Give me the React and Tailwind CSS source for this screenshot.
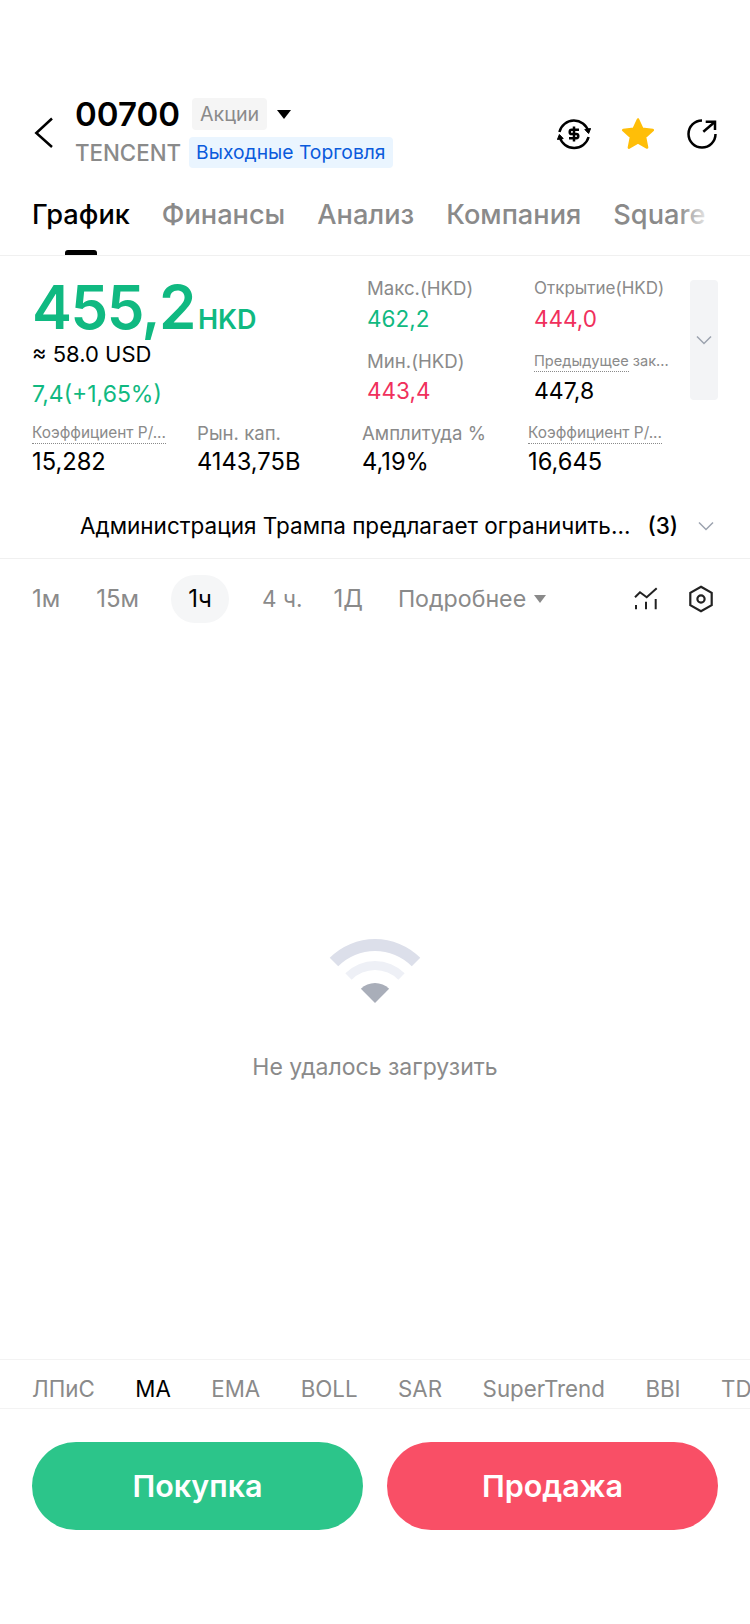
const green = "text-[#10b981]";
const red = "text-[#f0305c]";

const tabs = ["Финансы", "Анализ", "Компания", "Square"];
const indicators = ["EMA", "BOLL", "SAR", "SuperTrend", "BBI", "TD"];

const Chevron = ({ size = 20, color = "#9ca3af" }) => (
    <svg width={size} height={size} viewBox="0 0 20 20" fill="none" stroke={color} strokeWidth="1.5">
        <path d="M3 6.5 L10 13.5 L17 6.5" />
    </svg>
);

const SwapIcon = () => (
    <svg width="34" height="34" viewBox="0 0 34 34" fill="none" stroke="#000" strokeWidth="2.5">
        <path d="M2.4 15 A15 15 0 0 1 31.4 14.5" />
        <path d="M31.6 20 A15 15 0 0 1 2.7 20" />
        <path d="M27.8 12.5 L31.6 16.5 L33.6 11.5 Z" fill="#000" strokeWidth="1" />
        <path d="M6.2 21.5 L2.4 17.5 L0.4 22.5 Z" fill="#000" strokeWidth="1" />
        <path d="M22 12.8 H14.8 a2.1 2.1 0 0 0 0 4.2 h4.4 a2.1 2.1 0 0 1 0 4.2 H12" />
        <path d="M17 9.5 V24.5" />
    </svg>
);

const StarIcon = () => (
    <svg width="34" height="34" viewBox="0 0 34 34" fill="#ffbe08" stroke="#ffbe08" strokeWidth="2.5" strokeLinejoin="round">
        <path d="M17 2.5 L21.3 11.8 L31.8 13.1 L24.1 20.2 L26.1 30.6 L17 25.4 L7.9 30.6 L9.9 20.2 L2.2 13.1 L12.7 11.8 Z" />
    </svg>
);

const ShareIcon = () => (
    <svg width="34" height="34" viewBox="0 0 34 34" fill="none" stroke="#000" strokeWidth="2.5">
        <path d="M17 3.5 A13.5 13.5 0 1 0 30.5 17" />
        <path d="M18.3 14.7 L30 4.7" />
        <path d="M20.7 4.7 H30 V13" />
    </svg>
);

const ChartIcon = () => (
    <svg width="28" height="28" viewBox="0 0 28 28" fill="none" stroke="#222" strokeWidth="2">
        <path d="M3 12.3 L8 7.3 L14.7 12.3 L24.7 3.3" />
        <path d="M4 20 V24.3 M14 16.7 V24.3 M23.7 14 V24.3" />
    </svg>
);

const HexIcon = () => (
    <svg width="28" height="28" viewBox="0 0 28 28" fill="none" stroke="#222" strokeWidth="2.2">
        <path d="M14 1.7 L24.7 7.8 V20.2 L14 26.3 L3.3 20.2 V7.8 Z" />
        <circle cx="14" cy="14" r="3.6" />
    </svg>
);

const WifiIcon = () => (
    <svg width="92" height="66" viewBox="0 0 92 66">
        <path d="M0.75 19.75 A64 64 0 0 1 91.25 19.75 L82.77 28.23 A52 52 0 0 0 9.23 28.23 Z" fill="#dcdfea" />
        <path d="M16.3 35.3 A42 42 0 0 1 75.7 35.3 L69.33 41.67 A33 33 0 0 0 22.67 41.67 Z" fill="#eef0f6" />
        <path d="M31.86 50.86 A20 20 0 0 1 60.14 50.86 L46 65 Z" fill="#a9aeb9" />
    </svg>
);

const Dotted = ({ children }) => (
    <span className="border-b border-dotted border-[#8a8a8a] pb-[1px]">{children}</span>
);

const Metric = ({ width, label, value, dotted }) => (
    <div className={width}>
        <div className={dotted ? "text-[15.4px] leading-[22px] text-[#8a8a8a]" : "text-[18.6px] leading-[22px] text-[#8a8a8a]"}>
            {dotted ? <Dotted>{label}</Dotted> : label}
        </div>
        <div className="mt-[4px] text-[23.7px] leading-[28px] text-black">{value}</div>
    </div>
);

const App = () => {
    return (
        <div className="flex h-[1624px] w-[750px] flex-col overflow-hidden bg-white font-['Inter',sans-serif]">
            {/* header */}
            <div className="flex items-start pl-[32px] pr-[31px] pt-[96px]">
                <svg width="24" height="32" viewBox="0 0 24 32" fill="none" stroke="#000" strokeWidth="2.5" className="mt-[21px]">
                    <path d="M20 1.5 L4.3 16 L20 30" />
                </svg>
                <div className="ml-[19px]">
                    <div className="flex items-center">
                        <span className="text-[33px] font-semibold leading-[36px] text-black">00700</span>
                        <span className="ml-[12px] rounded-[4px] bg-[#f5f5f5] px-[8px] text-[19.7px] leading-[32px] text-[#8a8a8a]">Акции</span>
                        <span className="ml-[10px] h-0 w-0 border-x-[7px] border-t-[9px] border-x-transparent border-t-black" />
                    </div>
                    <div className="mt-[5px] flex items-center">
                        <span className="text-[22.3px] font-medium leading-[31px] text-[#8a8a8a]">TENCENT</span>
                        <span className="ml-[8px] rounded-[4px] bg-[#eaf5ff] px-[7px] text-[19.3px] leading-[31px] text-[#0a5bdc]">Выходные Торговля</span>
                    </div>
                </div>
                <div className="ml-auto mt-[21px] flex gap-[30px]">
                    <SwapIcon />
                    <StarIcon />
                    <ShareIcon />
                </div>
            </div>

            {/* tabs */}
            <div className="relative mt-[16px] h-[72px] shrink-0 border-b border-[#f0f0f0]">
                <div className="flex gap-[32px] whitespace-nowrap pl-[32px] pt-[14px] text-[27.2px] font-medium leading-[34px] text-[#8a8a8a]">
                    <div className="relative text-black">
                        График
                        <div className="absolute left-[33px] top-[52px] h-[5px] w-[32px] rounded-t-[3px] bg-black" />
                    </div>
                    {tabs.map((t) => (
                        <div key={t}>{t}</div>
                    ))}
                </div>
                <div className="absolute right-0 top-0 h-[60px] w-[72px] bg-gradient-to-r from-transparent to-white to-50%" />
            </div>

            {/* quote */}
            <div className="flex pl-[32px] pr-[32px] pt-[20px]">
                <div className="w-[335px]">
                    <div className="flex items-baseline">
                        <span className={`text-[60px] font-semibold leading-[62px] tracking-[-1.5px] ${green}`}>455,2</span>
                        <span className={`ml-[3px] text-[27px] font-semibold leading-[30px] ${green}`}>HKD</span>
                    </div>
                    <div className="mt-[2px] text-[22px] leading-[28px] text-black">≈ 58.0 USD</div>
                    <div className={`mt-[12px] text-[23px] leading-[28px] ${green}`}>7,4(+1,65%)</div>
                </div>
                <div className="w-[167px]">
                    <div className="text-[18.6px] leading-[24px] text-[#8a8a8a]">Макс.(HKD)</div>
                    <div className={`mt-[5px] text-[22.5px] leading-[28px] ${green}`}>462,2</div>
                    <div className="mt-[16px] text-[18.6px] leading-[24px] text-[#8a8a8a]">Мин.(HKD)</div>
                    <div className={`mt-[4px] text-[22.5px] leading-[28px] ${red}`}>443,4</div>
                </div>
                <div className="w-[156px]">
                    <div className="text-[17px] leading-[24px] text-[#8a8a8a]">Открытие(HKD)</div>
                    <div className={`mt-[5px] text-[22.5px] leading-[28px] ${red}`}>444,0</div>
                    <div className="mt-[16px] whitespace-nowrap text-[14.6px] leading-[24px] text-[#8a8a8a]">
                        <Dotted>Предыдущее</Dotted> зак...
                    </div>
                    <div className="mt-[4px] text-[23px] leading-[28px] text-black">447,8</div>
                </div>
                <div className="mt-[4px] flex h-[120px] w-[28px] shrink-0 items-center justify-center rounded-[4px] bg-[#f3f4f6]">
                    <Chevron />
                </div>
            </div>

            {/* metrics */}
            <div className="mt-[14px] flex pl-[32px]">
                <Metric width="w-[165px]" label="Коэффициент Р/..." value="15,282" dotted />
                <Metric width="w-[165px]" label="Рын. кап." value="4143,75B" />
                <Metric width="w-[166px]" label="Амплитуда %" value="4,19%" />
                <Metric width="w-[166px]" label="Коэффициент Р/..." value="16,645" dotted />
            </div>

            {/* news */}
            <div className="mt-[17px] flex h-[66px] shrink-0 items-center border-b border-[#f0f0f0] pl-[80px] pr-[34px] text-[22.5px] text-black">
                <span className="whitespace-nowrap">Администрация Трампа предлагает ограничить...</span>
                <span className="ml-[17px] font-medium">(3)</span>
                <span className="ml-auto">
                    <Chevron />
                </span>
            </div>

            {/* periods */}
            <div className="flex h-[80px] shrink-0 items-center pl-[32px] pr-[35px] text-[24px] text-[#8a8a8a]">
                <span>1м</span>
                <span className="ml-[36px]">15м</span>
                <span className="ml-[32px] flex h-[48px] w-[58px] items-center justify-center rounded-full bg-[#f5f6f7] text-black">1ч</span>
                <span className="ml-[33px] text-[22.5px]">4 ч.</span>
                <span className="ml-[31px]">1Д</span>
                <span className="ml-[35px] text-[23.2px]">Подробнее</span>
                <span className="ml-[8px] h-0 w-0 border-x-[6px] border-t-[8px] border-x-transparent border-t-[#8a8a8a]" />
                <div className="ml-auto flex gap-[27px]">
                    <ChartIcon />
                    <HexIcon />
                </div>
            </div>

            {/* empty chart */}
            <div className="flex flex-1 flex-col items-center pt-[299px]">
                <WifiIcon />
                <div className="mt-[49px] text-[23px] leading-[28px] text-[#8a8a8a]">Не удалось загрузить</div>
            </div>

            {/* indicators */}
            <div className="flex h-[50px] shrink-0 items-center gap-[40.5px] overflow-hidden whitespace-nowrap border-y border-[#f3f3f3] pl-[32px] pt-[10px] text-[22.3px] text-[#8a8a8a]">
                <span>ЛПиС</span>
                <span className="text-black">MA</span>
                {indicators.map((i) => (
                    <span key={i}>{i}</span>
                ))}
            </div>

            {/* buy / sell */}
            <div className="flex gap-[24px] pb-[94px] pl-[32px] pr-[32px] pt-[33px]">
                <button className="h-[88px] flex-1 rounded-full bg-[#2cc58a] text-[30.5px] font-semibold text-white">Покупка</button>
                <button className="h-[88px] flex-1 rounded-full bg-[#f94f66] text-[30.5px] font-semibold text-white">Продажа</button>
            </div>
        </div>
    );
};

export default App;
